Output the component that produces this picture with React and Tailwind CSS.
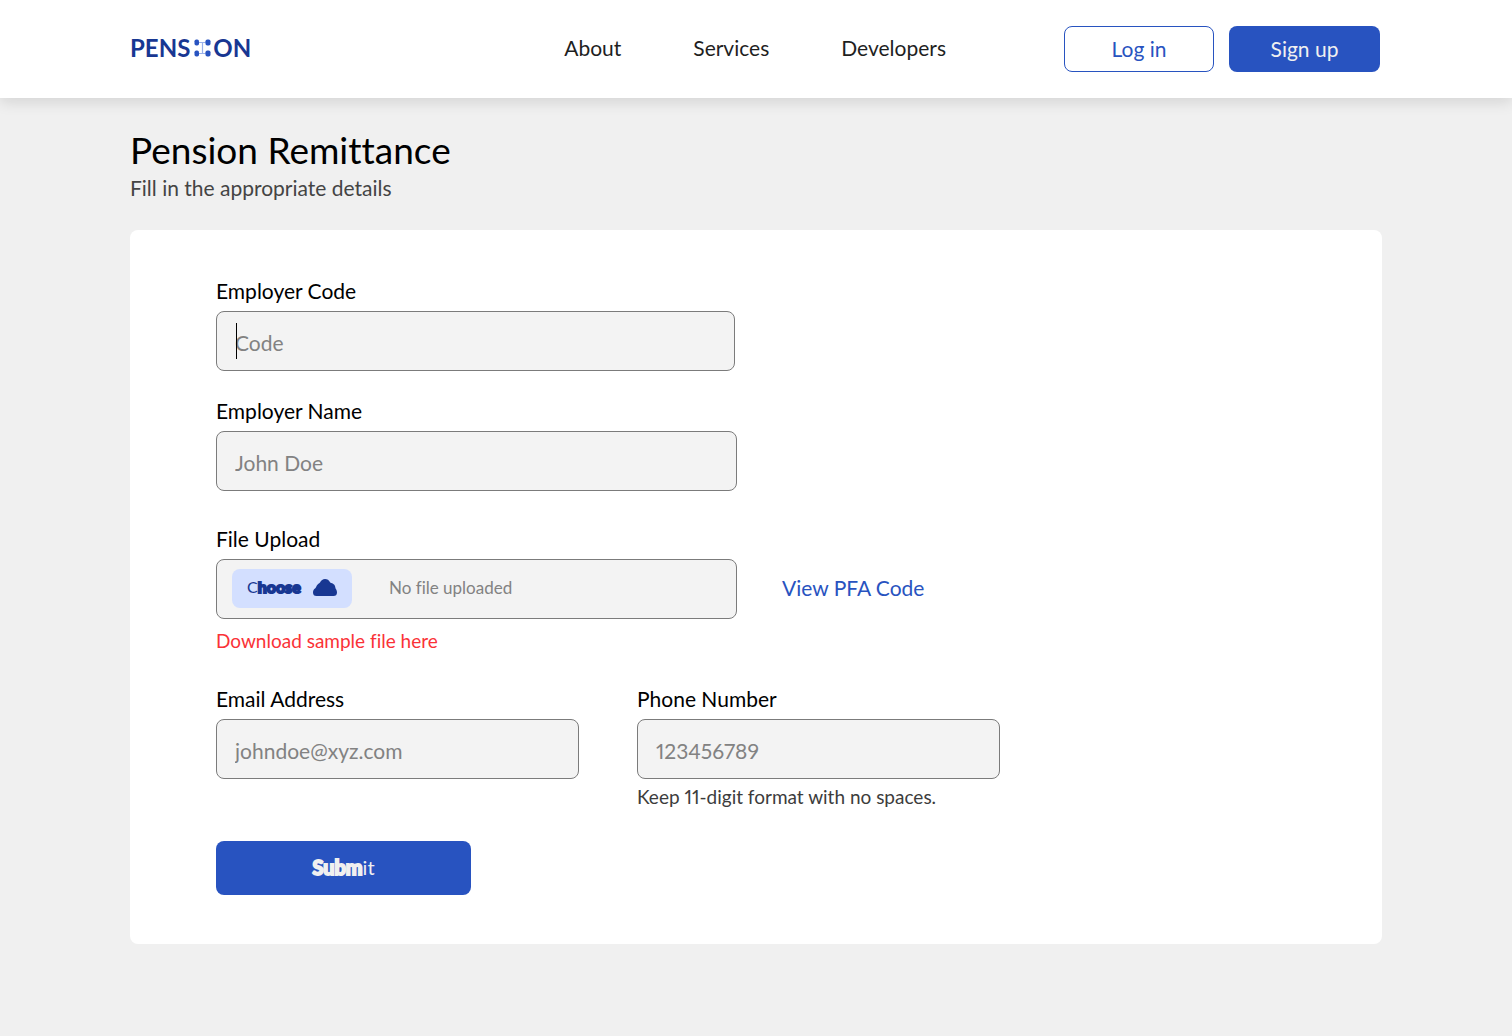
import React from "react";

function LogoMark() {
  return (
    <svg className="mr-0.5 ml-1 h-[18px] w-[17px]" viewBox="0 0 17 18" aria-hidden="true">
      <path d="M4 3.500h9M4 14.500h9M8.500 3.500v11" stroke="#9bb2ea" strokeWidth="1.200" fill="none" />
      <g fill="#2853c0">
        <rect x="0.500" y="0.500" width="4.500" height="6" rx="1.800" />
        <rect x="11.500" y="0.500" width="5" height="6" rx="1.800" />
        <rect x="0.500" y="11.500" width="4.500" height="6" rx="1.800" />
        <rect x="11.500" y="11.500" width="5" height="6" rx="1.800" />
      </g>
    </svg>
  );
}

function CloudIcon() {
  return (
    <svg className="h-[17px] w-6 shrink-0" viewBox="0 0 24 17" fill="#183792" aria-hidden="true">
      <path d="M3.500 17C1.300 17 0 15.600 0 13.400C0 11.600 0.800 10.200 2.300 9.200C3.200 8.400 3.300 7.300 4 6.200C4.800 4.900 6 4.600 7 3.500C8.200 1.200 9.800 0 12 0C14.300 0 16 1.200 17.200 3.400C18.300 4 20.200 4.200 21.300 5.700C22.300 7 22.200 8.400 22.700 9.700C23.500 10.800 24 11.900 24 13.400C24 15.600 22.700 17 20.500 17Z" />
    </svg>
  );
}

const inputClass =
  "block h-[60px] w-full rounded-lg border border-[#7b7b7b] bg-[#f3f3f3] px-[18px] pt-0.5 text-[21px] proportional-nums text-black outline-none placeholder:text-[#828282] placeholder:opacity-100";

function Field({ id, label, placeholder, type = "text", className, caret, hint }) {
  return (
    <div className={className}>
      <label htmlFor={id} className="mb-1.5 block text-[21px] leading-7">
        {label}
      </label>
      <div className="relative">
        <input id={id} type={type} placeholder={placeholder} className={inputClass} />
        {caret && <span className="absolute top-3 left-5 h-9 w-px bg-black" aria-hidden="true" />}
      </div>
      {hint && <p className="mt-1.5 text-[19px] leading-6 text-[#3c3c3c] proportional-nums">{hint}</p>}
    </div>
  );
}

export default function App() {
  return (
    <div className="min-h-screen bg-[#f0f0f0] font-['Lato',sans-serif] text-black [font-variant-ligatures:none]">
      <header className="flex flex-wrap items-center justify-between gap-4 bg-white px-4 py-[26px] shadow-[0_4px_14px_rgba(0,0,0,0.12)] xl:pr-[132px] xl:pl-[130px]">
        <a href="#" aria-label="Pension" className="flex items-center pb-0.5 text-[24px] leading-7 font-bold text-[#183792]">
          <span>PENS</span>
          <LogoMark />
          <span>ON</span>
        </a>
        <div className="flex flex-wrap items-center gap-6 xl:gap-[118px]">
          <nav className="flex gap-6 pb-0.5 text-[21px] leading-7 text-[#1f1f1f] xl:gap-[72px]">
            <a href="#">About</a>
            <a href="#">Services</a>
            <a href="#">Developers</a>
          </nav>
          <div className="flex gap-[15px] text-[21px]">
            <button type="button" className="h-[46px] w-[150px] rounded-lg border border-[#2853c0] text-[#2853c0]">
              Log in
            </button>
            <button type="button" className="h-[46px] w-[151px] rounded-lg bg-[#2853c0] text-[#f0f0f0]">
              Sign up
            </button>
          </div>
        </div>
      </header>

      <main className="px-4 pt-[29px] pb-[92px] xl:px-[130px]">
        <h1 className="text-[37px] leading-[45px]">Pension Remittance</h1>
        <p className="text-[21px] leading-8 text-[#444444]">Fill in the appropriate details</p>

        <form className="mt-[26px] rounded-lg bg-white px-6 pt-[47px] pb-[49px] lg:px-[86px]">
          <Field id="code" label="Employer Code" placeholder="Code" caret className="max-w-[519px]" />
          <Field id="name" label="Employer Name" placeholder="John Doe" className="mt-[26px] max-w-[521px]" />

          <div className="mt-[34px]">
            <label htmlFor="file" className="mb-1.5 block text-[21px] leading-7">
              File Upload
            </label>
            <div className="flex flex-wrap items-center gap-x-[45px] gap-y-2">
              <div className="relative flex h-[60px] w-full max-w-[521px] items-center gap-[37px] rounded-lg border border-[#7b7b7b] bg-[#f3f3f3] px-[15px] pb-0.5">
                <label
                  htmlFor="file"
                  className="flex h-[39px] w-[120px] shrink-0 cursor-pointer items-center justify-between rounded-lg bg-[#d3dfff] px-[15px] pb-0.5 text-[#183792]"
                >
                  <span className="text-[16px]">
                    C<span className="font-bold [-webkit-text-stroke:2px]">hoose</span>
                  </span>
                  <CloudIcon />
                </label>
                <input id="file" type="file" className="sr-only" />
                <span className="text-[17px] text-[#828282]">No file uploaded</span>
              </div>
              <a href="#" className="pb-0.5 text-[21px] leading-7 text-[#2853c0]">
                View PFA Code
              </a>
            </div>
            <a href="#" className="mt-2.5 block w-fit text-[19px] leading-6 text-[#fa3237]">
              Download sample file here
            </a>
          </div>

          <div className="mt-8 flex flex-wrap gap-x-[58px] gap-y-6">
            <Field id="email" type="email" label="Email Address" placeholder="johndoe@xyz.com" className="w-full max-w-[363px]" />
            <Field
              id="phone"
              type="tel"
              label="Phone Number"
              placeholder="123456789"
              className="w-full max-w-[363px]"
              hint="Keep 11-digit format with no spaces."
            />
          </div>

          <button type="submit" className="mt-8 h-[54px] w-[255px] rounded-lg bg-[#2853c0] pb-0.5 text-[20px] text-[#f0f0f0]">
            <span className="font-bold [-webkit-text-stroke:2px]">Subm</span>it
          </button>
        </form>
      </main>
    </div>
  );
}
